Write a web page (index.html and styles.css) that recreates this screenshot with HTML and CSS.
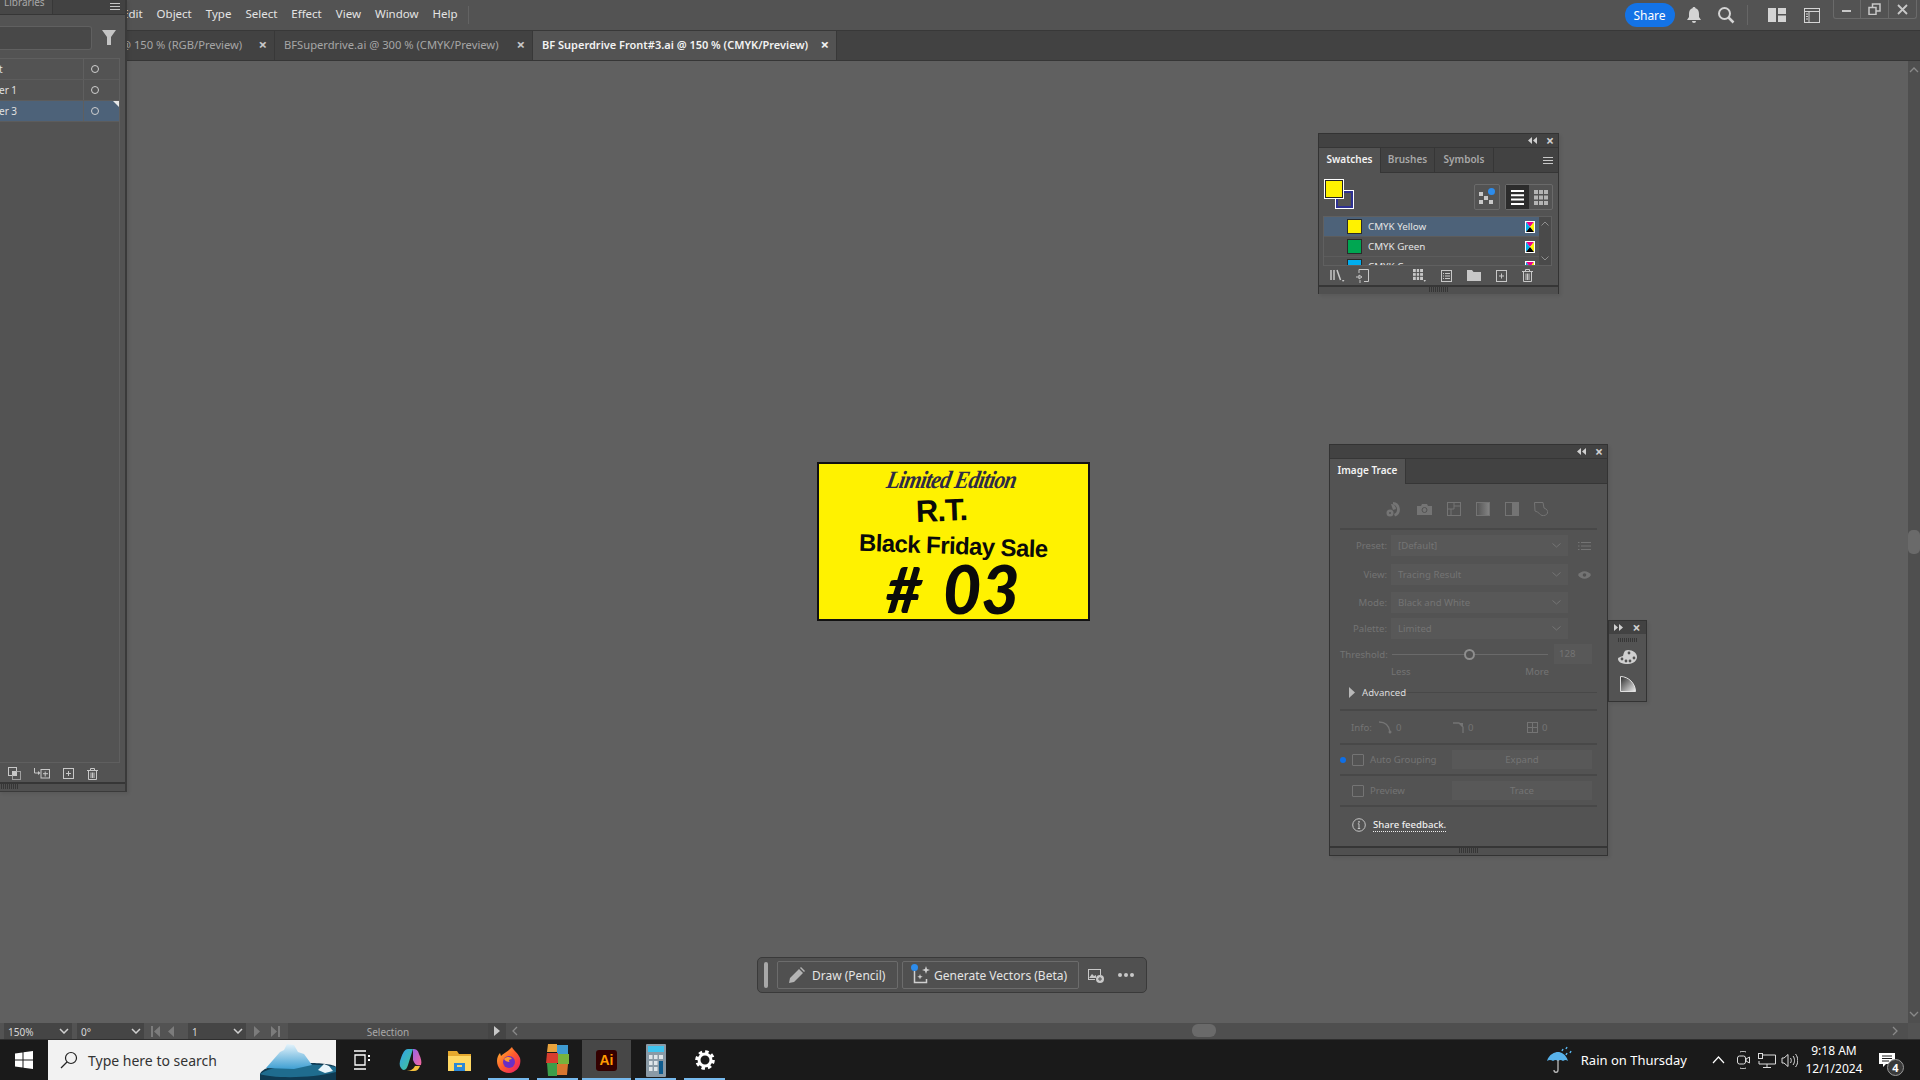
FILE: index.html
```html
<!DOCTYPE html>
<html lang="en">
<head>
  <meta charset="UTF-8" />
  <title>Adobe Illustrator</title>
  <link rel="stylesheet" href="styles.css">
</head>
<body>
  <div class="app">
    <!-- menu bar -->
    <header class="menubar">
      <nav class="menu">
        <span class="menu-edit">Edit</span>
        <span>Object</span>
        <span>Type</span>
        <span>Select</span>
        <span>Effect</span>
        <span>View</span>
        <span>Window</span>
        <span>Help</span>
      </nav>
      <div class="menu-sep"></div>
      <div class="top-right">
        <button class="share">Share</button>
        <svg class="top-icon bell" width="16" height="18" viewBox="0 0 16 18"><path fill="#d4d4d4" d="M8 1c1 0 1.500.6 1.500 1.300C12 3 13 5 13 8v3l2 3H1l2-3V8c0-3 1-5 3.500-5.700C6.500 1.600 7 1 8 1z"/><path fill="#d4d4d4" d="M6 15h4a2 2 0 0 1-4 0z"/></svg>
        <svg class="top-icon find" width="18" height="18" viewBox="0 0 18 18"><circle cx="7.500" cy="7.500" r="5.500" fill="none" stroke="#d4d4d4" stroke-width="2"/><path d="M11.500 11.500l5 5" stroke="#d4d4d4" stroke-width="2.500"/></svg>
        <div class="top-sep"></div>
        <svg class="top-icon layout" width="18" height="14" viewBox="0 0 18 14"><path fill="#d4d4d4" d="M0 0h8v14H0zM10 0h8v6h-8zM10 7.500h8V14h-8z"/></svg>
        <svg class="top-icon frame" width="16" height="15" viewBox="0 0 16 15"><rect x=".5" y=".5" width="15" height="14" fill="none" stroke="#d4d4d4"/><path d="M1 3.500h14M5 4v10" stroke="#d4d4d4"/><path d="M2 6h2M2 8.500h2M2 11h2" stroke="#d4d4d4"/></svg>
        <div class="win-controls">
          <span class="win-btn"><svg width="11" height="11" viewBox="0 0 11 11"><path d="M1 7h9" stroke="#c8c8c8" stroke-width="2"/></svg></span>
          <span class="win-btn"><svg width="13" height="12" viewBox="0 0 13 12"><path fill="none" stroke="#c8c8c8" stroke-width="1.500" d="M1 4.500h7v7H1zM4.500 4V1h7.500v7H8.500"/></svg></span>
          <span class="win-btn"><svg width="11" height="11" viewBox="0 0 11 11"><path d="M1 1l9 9M10 1l-9 9" stroke="#c8c8c8" stroke-width="1.800"/></svg></span>
        </div>
      </div>
    </header>

    <!-- document tabs -->
    <div class="tabbar">
      <div class="doc-tab tab-one"><span class="doc-name">@ 150 % (RGB/Preview)</span><span class="doc-x">×</span></div>
      <div class="doc-tab tab-two"><span class="doc-name">BFSuperdrive.ai @ 300 % (CMYK/Preview)</span><span class="doc-x">×</span></div>
      <div class="doc-tab tab-active"><span class="doc-name">BF Superdrive Front#3.ai @ 150 % (CMYK/Preview)</span><span class="doc-x">×</span></div>
    </div>

    <!-- canvas -->
    <main class="workspace">
      <div class="canvas">
        <div class="artboard">
          <div class="art-limited">Limited Edition</div>
          <div class="art-rt">R.T.</div>
          <div class="art-sale">Black Friday Sale</div>
          <div class="art-num"><span class="art-hash">#</span><span>03</span></div>
        </div>

        <div class="quickbar">
          <div class="quick-grip"></div>
          <button class="quick-btn quick-draw">
            <svg width="17" height="17" viewBox="0 0 17 17"><path fill="#b4b4b4" d="M1 16l1-5L11 2l4 4-9 9zM12 1l1-1 4 4-1 1z"/></svg>
            Draw (Pencil)
          </button>
          <button class="quick-btn quick-gen">
            <span class="gen-icon">
              <svg width="18" height="20" viewBox="0 0 18 20"><path fill="none" stroke="#cfcfcf" stroke-width="1.500" d="M1.500 6v11.500h12V14"/><path fill="#cfcfcf" d="M13 1l1 3 3 1-3 1-1 3-1-3-3-1 3-1zM7 9l.7 2 2 .7-2 .7L7 14.500l-.7-2-2-.7 2-.7z"/></svg>
              <i class="gen-dot"></i>
            </span>
            Generate Vectors (Beta)
          </button>
          <svg class="quick-photo" width="16" height="15" viewBox="0 0 16 15"><path fill="#c8c8c8" d="M0 1h13v6h-1V2H1v9h6v1H0z"/><path fill="#c8c8c8" d="M1 10l3-4 2 2 2-1v3H1z"/><circle cx="12" cy="11" r="4" fill="#c8c8c8"/><path d="M12 9v4M10 11h4" stroke="#535353"/></svg>
          <span class="quick-more"><i></i><i></i><i></i></span>
        </div>
      </div>
      <div class="vscroll">
        <svg width="10" height="6" viewBox="0 0 10 6"><path d="M1 5l4-4 4 4" fill="none" stroke="#8a8a8a" stroke-width="1.300"/></svg>
        <span class="vscroll-thumb"></span>
        <svg width="10" height="6" viewBox="0 0 10 6"><path d="M1 1l4 4 4-4" fill="none" stroke="#8a8a8a" stroke-width="1.300"/></svg>
      </div>
    </main>

    <!-- status bar -->
    <footer class="statusbar">
      <div class="status-field field-zoom">150%</div>
      <div class="status-drop"><svg width="10" height="6" viewBox="0 0 10 6"><path d="M1 1l4 4 4-4" fill="none" stroke="#d0d0d0" stroke-width="1.500"/></svg></div>
      <div class="status-field field-rot">0°</div>
      <div class="status-drop"><svg width="10" height="6" viewBox="0 0 10 6"><path d="M1 1l4 4 4-4" fill="none" stroke="#d0d0d0" stroke-width="1.500"/></svg></div>
      <div class="status-nav nav-prev"><svg width="30" height="11" viewBox="0 0 30 11"><path fill="#7c7c7c" d="M0 0h2v11H0zM9 0v11L3 5.500zM23 0v11l-6-5.500z"/></svg></div>
      <div class="status-field field-page">1</div>
      <div class="status-drop"><svg width="10" height="6" viewBox="0 0 10 6"><path d="M1 1l4 4 4-4" fill="none" stroke="#d0d0d0" stroke-width="1.500"/></svg></div>
      <div class="status-nav"><svg width="28" height="11" viewBox="0 0 28 11"><path fill="#7c7c7c" d="M1 0v11l6-5.500zM18 0v11l6-5.500zM25 0h2v11h-2z"/></svg></div>
      <div class="status-tool">Selection</div>
      <div class="status-arrow"><svg width="6" height="10" viewBox="0 0 6 10"><path fill="#c8c8c8" d="M0 0l6 5-6 5z"/></svg></div>
      <div class="hscroll">
        <svg width="6" height="10" viewBox="0 0 6 10"><path d="M5 1L1 5l4 4" fill="none" stroke="#8a8a8a" stroke-width="1.300"/></svg>
        <span class="hscroll-thumb"></span>
        <svg width="6" height="10" viewBox="0 0 6 10"><path d="M1 1l4 4-4 4" fill="none" stroke="#8a8a8a" stroke-width="1.300"/></svg>
      </div>
      <div class="status-corner"></div>
    </footer>

    <!-- windows taskbar -->
    <div class="taskbar">
      <div class="start">
        <svg width="18" height="18" viewBox="0 0 18 18"><path fill="#fff" d="M0 2.500L7.500 1.400V8.500H0zM8.500 1.300L18 0v8.500H8.500zM0 9.500h7.500v7.100L0 15.500zM8.500 9.500H18V18l-9.500-1.300z"/></svg>
      </div>
      <div class="searchbox">
        <svg width="18" height="18" viewBox="0 0 18 18"><circle cx="11" cy="7" r="5.500" fill="none" stroke="#222" stroke-width="1.200"/><path d="M7 11l-6 6" stroke="#222" stroke-width="1.200"/></svg>
        <span class="search-text">Type here to search</span>
        <svg class="iceberg" width="76" height="40" viewBox="0 0 76 40">
          <defs><linearGradient id="ice" x1="0" y1="0" x2="0" y2="1"><stop offset="0" stop-color="#e4f3fb"/><stop offset="1" stop-color="#3f9fd2"/></linearGradient></defs>
          <path fill="#0f3a52" d="M0 40V34C4 26 24 22 50 23c12 0 26 2 26 4v13z"/>
          <path fill="#1f6c8e" d="M0 34c10 4 50 5 76-2v-5c-20-4-60-4-76 7z"/>
          <path fill="url(#ice)" d="M6 28L20 12 24 10 27 4 34 5 38 12 44 14 52 25 34 29z"/>
          <path fill="#e9f5fb" d="M58 30l6-6 5 2 4 5-8 2z"/>
        </svg>
      </div>
      <div class="task-items">
        <span class="task-item">
          <svg width="17" height="20" viewBox="0 0 17 20"><path fill="none" stroke="#fff" stroke-width="1.300" d="M1 1h12M1 19h12M2 5h10v10H2z"/><path stroke="#fff" stroke-width="2" d="M16 5v2M16 9v2"/></svg>
        </span>
        <span class="task-item">
          <svg width="24" height="24" viewBox="0 0 24 24"><defs><linearGradient id="cop1" x1="0" y1="0" x2="1" y2="1"><stop offset="0" stop-color="#2e9ff0"/><stop offset="1" stop-color="#46c88c"/></linearGradient><linearGradient id="cop2" x1="0" y1="0" x2="1" y2="1"><stop offset="0" stop-color="#9a62e8"/><stop offset="1" stop-color="#f5679a"/></linearGradient></defs><path fill="url(#cop1)" d="M9 1h5L9 17c-1 3-2 5-5 5-3-2-4-5-3-9C3 7 5 1 9 1z"/><path fill="url(#cop2)" d="M14 1c3 0 5 1 6 5 2 4 3 8 2 11-4 1-6 0-8-5z"/><path fill="#f5c13d" d="M6 23c5 0 8-1 10-5l5 0c-1 3-3 5-6 5z"/></svg>
        </span>
        <span class="task-item">
          <svg width="23" height="21" viewBox="0 0 23 21"><path fill="#e6a92e" d="M0 1h9l2 3h12v17H0z"/><path fill="#ffd864" d="M0 6h23v15H0z"/><path fill="#2b88d8" d="M6 13h11v8H6z"/><path fill="#ffd864" d="M9 15h5v2H9z"/></svg>
        </span>
        <span class="task-item task-open">
          <svg width="24" height="26" viewBox="0 0 24 26"><defs><linearGradient id="fox" x1="0" y1="0" x2="1" y2="1"><stop offset="0" stop-color="#ffc02e"/><stop offset=".5" stop-color="#ff5a2e"/><stop offset="1" stop-color="#e5176e"/></linearGradient></defs><path fill="url(#fox)" d="M15 0c1 3 6 6 8 11 2 8-4 15-11 15C5 26 0 21 0 14c0-3 1-6 3-8l1 3c2-3 7-4 11-9z"/><circle cx="12" cy="15" r="6" fill="#6a2fc4"/><path fill="#ff9a2e" d="M7 12c3-3 7-2 8 0-3 0-4 2-2 3-3 0-5-1-6-3z"/></svg>
        </span>
        <span class="task-item task-open">
          <svg width="23" height="32" viewBox="0 0 23 32"><path fill="#e8a33d" d="M2 0h9v8H1z"/><path fill="#3e9ad0" d="M11 1h11v9H11z"/><path fill="#d83d2e" d="M1 9h11v10H0z"/><path fill="#78b33c" d="M12 10h11v10H12z"/><path fill="#3c9e4a" d="M1 19h10v13H2z"/><path fill="#d8762e" d="M11 20h11l-1 11H11z"/></svg>
        </span>
        <span class="task-item task-active task-open">
          <span class="ai-icon">Ai</span>
        </span>
        <span class="task-item task-open">
          <svg width="20" height="33" viewBox="0 0 20 33"><rect width="20" height="33" rx="1" fill="#8a9aa6"/><rect x="2" y="2" width="16" height="6" fill="#3fc3ee"/><g fill="#dfe5e9"><path d="M3 11h3.500v4H3zM8 11h3.500v4H8zM13 11h4v4h-4zM3 17h3.500v4H3zM8 17h3.500v4H8zM3 23h3.500v4H3zM8 23h3.500v4H8z"/></g><path fill="#0f5c8f" d="M13 17h4v13h-4z"/></svg>
        </span>
        <span class="task-item task-open">
          <svg width="20" height="20" viewBox="0 0 20 20"><circle cx="10" cy="10" r="6" fill="none" stroke="#fff" stroke-width="3"/><circle cx="10" cy="10" r="8.300" fill="none" stroke="#fff" stroke-width="3" stroke-dasharray="3.500 3"/></svg>
        </span>
      </div>
      <div class="tray">
        <svg class="tray-umbrella" width="26" height="30" viewBox="0 0 26 30"><path fill="#58b2ea" d="M0 16C2 9 8 7 11 7s8 2 10 9c-2-1.500-3-1.500-5 0-2-1.500-3-1.500-5 0-2-1.500-3-1.500-5 0-2-1.500-4-1.500-6 0z"/><path d="M11 15v10c0 3-4 3-4 0" fill="none" stroke="#bbb" stroke-width="1.300"/><path d="M16 4l-1 2M20 2l-1 2M24 6l-1 2M20 8l-1 2" stroke="#58b2ea" stroke-width="1.500"/></svg>
        <span class="tray-weather">Rain on Thursday</span>
        <svg class="tray-chev" width="13" height="8" viewBox="0 0 13 8"><path d="M1 7l5.500-6L12 7" fill="none" stroke="#fff" stroke-width="1.200"/></svg>
        <svg class="tray-icon tray-meet" width="13" height="18" viewBox="0 0 13 18"><path d="M3 1c2-1 4-1 6 0M3 17c2 1 4 1 6 0" stroke="#ddd" fill="none"/><rect x=".5" y="5" width="8" height="8" rx="2" fill="none" stroke="#ddd"/><path d="M9 8l3.500-2v6L9 10z" fill="none" stroke="#ddd"/></svg>
        <svg class="tray-icon tray-net" width="18" height="15" viewBox="0 0 18 15"><path d="M5 2h12.500v9H1V8M9 11v3M5 14.500h8" fill="none" stroke="#ddd"/><rect x=".5" y=".5" width="4" height="5" fill="none" stroke="#ddd"/></svg>
        <svg class="tray-icon" width="17" height="15" viewBox="0 0 17 15"><path d="M1 5h2l4-3.500v12L3 10H1z" fill="none" stroke="#ddd"/><path d="M9.500 5c1 1.500 1 3.500 0 5M12 3c2 2.500 2 6.500 0 9M14.500 1c3 3.500 3 9.500 0 13" fill="none" stroke="#ddd"/></svg>
        <div class="clock"><span>9:18 AM</span><span>12/1/2024</span></div>
        <span class="notify">
          <svg width="16" height="14" viewBox="0 0 16 14"><path fill="#fff" d="M0 0h16v11H7l-3 3v-3H0z"/><path d="M3 3h10M3 5.500h10M3 8h7" stroke="#1b1b1b"/></svg>
          <span class="notify-badge">4</span>
        </span>
      </div>
    </div>

    <!-- left panel -->
    <aside class="panel left-panel">
      <div class="left-head">
        <span class="left-libs">Libraries</span>
        <span class="menu-lines"><i></i><i></i><i></i></span>
      </div>
      <div class="left-search">
        <div class="left-input"></div>
        <svg width="14" height="15" viewBox="0 0 14 15"><path fill="#c4c4c4" d="M0 0h14L9 7v8H5V7z"/></svg>
      </div>
      <div class="layer-list">
        <div class="layer-row"><span class="layer-name">t</span><span class="layer-dot"></span></div>
        <div class="layer-row"><span class="layer-name">er 1</span><span class="layer-dot"></span></div>
        <div class="layer-row layer-sel"><span class="layer-name">er 3</span><span class="layer-dot"></span></div>
      </div>
      <div class="left-foot">
        <svg width="13" height="13" viewBox="0 0 13 13"><rect x=".5" y=".5" width="8" height="8" fill="none" stroke="#c8c8c8"/><rect x="4.500" y="4.500" width="8" height="8" fill="none" stroke="#a0a0a0"/><rect x="4" y="4" width="4.500" height="4.500" fill="#c8c8c8"/></svg>
        <svg width="16" height="11" viewBox="0 0 16 11"><path d="M.5 0v5h4" fill="none" stroke="#c8c8c8"/><path d="M4 3l2.500 2L4 7z" fill="#c8c8c8"/><rect x="7" y="1.500" width="8.500" height="8.500" fill="none" stroke="#c8c8c8"/><path d="M11.200 3.500v5M9 5.700h5" stroke="#c8c8c8"/></svg>
        <svg width="11" height="11" viewBox="0 0 11 11"><rect x=".5" y=".5" width="10" height="10" fill="none" stroke="#c8c8c8"/><path d="M5.500 3v5M3 5.500h5" stroke="#c8c8c8"/></svg>
        <svg width="11" height="12" viewBox="0 0 11 12"><path d="M0 2.500h11M3.500 2V.5h4V2M1.500 3v8.500h8V3M4 4.500v5.500M5.500 4.500v5.500M7 4.500v5.500" fill="none" stroke="#c8c8c8"/></svg>
      </div>
      <div class="panel-grip left-grip"><span class="grip"></span></div>
    </aside>

    <!-- swatches panel -->
    <section class="panel swatches">
      <div class="panel-head">
        <svg width="9" height="7" viewBox="0 0 9 7"><path fill="#d0d0d0" d="M4 0v7L0 3.500zM9 0v7L5 3.500z"/></svg>
        <span class="panel-x">×</span>
      </div>
      <div class="panel-tabs">
        <span class="panel-tab tab-on">Swatches</span>
        <span class="panel-tab">Brushes</span>
        <span class="panel-tab">Symbols</span>
        <span class="menu-lines"><i></i><i></i><i></i></span>
      </div>
      <div class="swatch-tools">
        <div class="color-pair">
          <span class="color-stroke"></span>
          <span class="color-fill"></span>
        </div>
        <span class="kind-btn">
          <svg width="18" height="19" viewBox="0 0 18 19"><path fill="#c8c8c8" d="M1 4h4v4H1zM6 8h4v4H6zM1 12h4v4H1zM11 12h4v4h-4z"/><circle cx="13.500" cy="3.500" r="3.500" fill="#2d8ceb"/></svg>
        </span>
        <span class="view-btns">
          <span class="view-btn view-on"><svg width="13" height="15" viewBox="0 0 13 15"><path fill="#fff" d="M0 0h13v2H0zM0 4.300h13v2H0zM0 8.600h13v2H0zM0 13h13v2H0z"/></svg></span>
          <span class="view-btn"><svg width="14" height="15" viewBox="0 0 14 15"><path fill="#b4b4b4" d="M0 0h4v4H0zM5 0h4v4H5zM10 0h4v4h-4zM0 5.500h4v4H0zM5 5.500h4v4H5zM10 5.500h4v4h-4zM0 11h4v4H0zM5 11h4v4H5zM10 11h4v4h-4z"/></svg></span>
        </span>
      </div>
      <div class="swatch-list">
        <div class="swatch-rows">
          <div class="swatch-row swatch-sel"><span class="chip chip-yellow"></span><span class="swatch-name">CMYK Yellow</span><svg class="cmyk" width="10" height="12" viewBox="0 0 10 12"><rect width="10" height="12" fill="#fff"/><path fill="#ec008c" d="M1 1h8L5 6z"/><path fill="#00aeef" d="M1 1v10l4-5z"/><path fill="#fff200" d="M9 1v10L5 6z"/><path fill="#000" d="M1 11h8L5 6z"/></svg></div>
          <div class="swatch-row"><span class="chip chip-green"></span><span class="swatch-name">CMYK Green</span><svg class="cmyk" width="10" height="12" viewBox="0 0 10 12"><rect width="10" height="12" fill="#fff"/><path fill="#ec008c" d="M1 1h8L5 6z"/><path fill="#00aeef" d="M1 1v10l4-5z"/><path fill="#fff200" d="M9 1v10L5 6z"/><path fill="#000" d="M1 11h8L5 6z"/></svg></div>
          <div class="swatch-row swatch-cut"><span class="chip chip-cyan"></span><span class="swatch-name">CMYK Cyan</span><svg class="cmyk" width="10" height="12" viewBox="0 0 10 12"><rect width="10" height="12" fill="#fff"/><path fill="#ec008c" d="M1 1h8L5 6z"/><path fill="#00aeef" d="M1 1v10l4-5z"/><path fill="#fff200" d="M9 1v10L5 6z"/></svg></div>
        </div>
        <div class="swatch-scroll">
          <svg width="8" height="5" viewBox="0 0 8 5"><path d="M.5 4.500L4 1l3.500 3.500" fill="none" stroke="#8f8f8f"/></svg>
          <svg width="8" height="5" viewBox="0 0 8 5"><path d="M.5.500L4 4 7.500.500" fill="none" stroke="#8f8f8f"/></svg>
        </div>
      </div>
      <div class="swatch-foot">
        <svg class="foot-lib" width="15" height="13" viewBox="0 0 15 13"><path d="M1 1v10M4 1v10M7 1l3.500 10" stroke="#c8c8c8" stroke-width="1.500"/><path d="M12 11h2.500L13 13z" fill="#c8c8c8"/></svg>
        <svg class="foot-place" width="13" height="14" viewBox="0 0 13 14"><path d="M3 4V.5h9.500V12.500H8" fill="none" stroke="#c8c8c8"/><path d="M0 8h5M3 6l3 2-3 2zM4 11v3" stroke="#c8c8c8"/></svg>
        <svg class="foot-grid" width="13" height="13" viewBox="0 0 13 13"><path fill="#c8c8c8" d="M0 0h10v11H0z"/><path d="M3.300 0v11M6.600 0v11M0 3.600h10M0 7.300h10" stroke="#535353"/><path fill="#c8c8c8" d="M10.500 11h2.500L11.700 13z"/></svg>
        <svg class="foot-icon" width="11" height="12" viewBox="0 0 11 12"><rect x=".5" y=".5" width="10" height="11" fill="none" stroke="#c8c8c8"/><path d="M2 3.500h1M4 3.500h5M2 6h1M4 6h5M2 8.500h1M4 8.500h5" stroke="#c8c8c8"/></svg>
        <svg class="foot-icon" width="14" height="11" viewBox="0 0 14 11"><path fill="#c8c8c8" d="M0 0h5l1.500 2H14v9H0z"/></svg>
        <svg class="foot-icon" width="11" height="12" viewBox="0 0 11 12"><rect x=".5" y=".5" width="10" height="11" fill="none" stroke="#c8c8c8"/><path d="M5.500 3.500v5M3 6h5" stroke="#c8c8c8"/></svg>
        <svg class="foot-icon" width="11" height="13" viewBox="0 0 11 13"><path d="M0 2.500h11M3.500 2V.5h4V2M1.500 3v9.500h8V3M4 4.500v6.500M5.500 4.500v6.500M7 4.500v6.500" fill="none" stroke="#c8c8c8"/></svg>
      </div>
      <div class="panel-grip"><span class="grip"></span></div>
    </section>

    <!-- image trace panel -->
    <section class="panel trace">
      <div class="panel-head">
        <svg width="9" height="7" viewBox="0 0 9 7"><path fill="#d0d0d0" d="M4 0v7L0 3.500zM9 0v7L5 3.500z"/></svg>
        <span class="panel-x">×</span>
      </div>
      <div class="panel-tabs"><span class="panel-tab tab-on tab-trace">Image Trace</span></div>
      <div class="trace-body">
        <div class="trace-icons">
          <svg width="16" height="15" viewBox="0 0 16 15"><path fill="#747474" d="M7 0a7.500 7.500 0 0 1 2 14.500L8 12a5 5 0 0 0-1-9.500z"/><path fill="#747474" d="M5 2a5 5 0 0 1 5 5l-3 1z"/><circle cx="4" cy="11" r="3.500" fill="#747474"/><circle cx="4" cy="11" r="1" fill="#535353"/></svg>
          <svg width="15" height="11" viewBox="0 0 15 11"><path fill="#747474" d="M0 2h4l1-2h5l1 2h4v9H0z"/><circle cx="7.500" cy="6" r="2.500" fill="none" stroke="#535353"/></svg>
          <svg width="14" height="14" viewBox="0 0 14 14"><rect x=".5" y=".5" width="13" height="13" fill="none" stroke="#747474"/><path d="M7 .5V7H.5M7 4h6.500M4 7v6.500" fill="none" stroke="#747474"/></svg>
          <svg width="14" height="14" viewBox="0 0 14 14"><defs><linearGradient id="ggr"><stop offset="0" stop-color="#535353"/><stop offset="1" stop-color="#858585"/></linearGradient></defs><rect x=".5" y=".5" width="13" height="13" fill="url(#ggr)" stroke="#747474"/></svg>
          <svg width="14" height="14" viewBox="0 0 14 14"><rect x=".5" y=".5" width="13" height="13" fill="none" stroke="#747474"/><rect x="7" y="0" width="7" height="14" fill="#747474"/></svg>
          <svg width="14" height="14" viewBox="0 0 14 14"><path d="M.5.500H9L10 6c3 1 4 3 3.500 5C13 13 10 14 8 13.500 6 13 5 10 1 9z" fill="none" stroke="#747474"/></svg>
        </div>
        <div class="trace-row row-preset">
          <span class="trace-label">Preset:</span>
          <div class="trace-select"><span>[Default]</span><svg width="9" height="5" viewBox="0 0 9 5"><path d="M.5.500L4.500 4l4-3.500" fill="none" stroke="#747474"/></svg></div>
          <svg class="row-icon" width="13" height="8" viewBox="0 0 13 8"><path d="M3 .5h10M3 4h10M3 7.500h10M0 .5h1.500M0 4h1.500M0 7.500h1.500" stroke="#747474"/></svg>
        </div>
        <div class="trace-row row-view">
          <span class="trace-label">View:</span>
          <div class="trace-select"><span>Tracing Result</span><svg width="9" height="5" viewBox="0 0 9 5"><path d="M.5.500L4.500 4l4-3.500" fill="none" stroke="#747474"/></svg></div>
          <svg class="row-icon" width="13" height="8" viewBox="0 0 13 8"><path fill="#747474" d="M0 4c3-5 10-5 13 0-3 5-10 5-13 0z"/><circle cx="6.500" cy="4" r="1.800" fill="#535353"/></svg>
        </div>
        <div class="trace-row row-mode">
          <span class="trace-label">Mode:</span>
          <div class="trace-select"><span>Black and White</span><svg width="9" height="5" viewBox="0 0 9 5"><path d="M.5.500L4.500 4l4-3.500" fill="none" stroke="#747474"/></svg></div>
        </div>
        <div class="trace-row row-palette">
          <span class="trace-label">Palette:</span>
          <div class="trace-select"><span>Limited</span><svg width="9" height="5" viewBox="0 0 9 5"><path d="M.5.500L4.500 4l4-3.500" fill="none" stroke="#747474"/></svg></div>
        </div>
        <div class="threshold">
          <span class="trace-label">Threshold:</span>
          <div class="slider"><span class="slider-knob"></span></div>
          <span class="thresh-val">128</span>
        </div>
        <div class="less-more"><span>Less</span><span>More</span></div>
        <div class="advanced">
          <svg width="6" height="11" viewBox="0 0 6 11"><path fill="#b8b8b8" d="M0 0l6 5.500L0 11z"/></svg>
          <span class="adv-text">Advanced</span>
          <span class="adv-line"></span>
        </div>
        <div class="trace-info">
          <span class="info-label">Info:</span>
          <span class="info-item item-paths"><svg width="13" height="13" viewBox="0 0 13 13"><path d="M0 1c6 0 10 3 11 10" fill="none" stroke="#747474" stroke-width="1.300"/><circle cx="11" cy="11" r="1.500" fill="#747474"/></svg>0</span>
          <span class="info-item item-anchors"><svg width="11" height="11" viewBox="0 0 11 11"><path d="M0 1h6l4 4v6" fill="none" stroke="#747474" stroke-width="1.300"/><path fill="#747474" d="M6 1h4v4z"/></svg>0</span>
          <span class="info-item"><svg width="11" height="11" viewBox="0 0 11 11"><rect x=".5" y=".5" width="10" height="10" fill="none" stroke="#747474"/><path d="M5.500 0v11M0 5.500h11" stroke="#747474"/></svg>0</span>
        </div>
        <div class="trace-check row-group">
          <i class="blue-dot"></i>
          <span class="checkbox"></span>
          <span class="check-label">Auto Grouping</span>
          <span class="trace-btn">Expand</span>
        </div>
        <div class="trace-check row-preview">
          <span class="checkbox"></span>
          <span class="check-label">Preview</span>
          <span class="trace-btn">Trace</span>
        </div>
        <div class="feedback">
          <svg width="14" height="14" viewBox="0 0 14 14"><circle cx="7" cy="7" r="6.300" fill="none" stroke="#c4c4c4"/><path d="M7 5.800v4.800M5.800 10.500h2.400M5.800 5.800H7" fill="none" stroke="#c4c4c4"/><circle cx="7" cy="3.800" r=".9" fill="#c4c4c4"/></svg>
          <span class="feedback-link">Share feedback.</span>
        </div>
      </div>
      <div class="panel-grip"><span class="grip"></span></div>
    </section>

    <!-- collapsed panel dock -->
    <section class="panel mini-dock">
      <div class="panel-head mini-head">
        <svg width="9" height="7" viewBox="0 0 9 7"><path fill="#d0d0d0" d="M0 0v7l4-3.500zM5 0v7l4-3.500z"/></svg>
        <span class="panel-x">×</span>
      </div>
      <span class="grip mini-grip"></span>
      <svg class="mini-palette" width="19" height="14" viewBox="0 0 19 14"><path fill="#d0d0d0" d="M10 0c5 0 9 3 9 7 0 3-3 7-9 7-6 0-10-2-10-5 0-2 3-2 5-3 1-3 1-6 5-6z"/><g fill="#535353"><circle cx="4" cy="9" r="1.400"/><circle cx="8" cy="11" r="1.400"/><circle cx="12" cy="11" r="1.400"/><circle cx="16" cy="8" r="1.400"/><circle cx="11" cy="3" r="1.400"/></g></svg>
      <svg class="mini-grad" width="16" height="16" viewBox="0 0 16 16"><defs><linearGradient id="fan" x1="0" y1="0" x2="1" y2="1"><stop offset="0" stop-color="#2a2a2a"/><stop offset="1" stop-color="#f0f0f0"/></linearGradient></defs><path fill="url(#fan)" stroke="#e0e0e0" d="M.5.500c8 0 15 7 15 15H.5z"/></svg>
    </section>
  </div>
</body>
</html>
```

FILE: styles.css
```css
* {
  box-sizing: border-box;
}

html, body {
  margin: 0;
  height: 100%;
  overflow: hidden;
}

body {
  font-family: "Noto Sans", "Open Sans", sans-serif;
  font-size: 11px;
  color: #d8d8d8;
}

button {
  font-family: inherit;
}

.app {
  position: relative;
  display: flex;
  flex-direction: column;
  width: 1920px;
  height: 1080px;
  background: #606060;
}

/* menu bar */
.menubar {
  display: flex;
  align-items: center;
  height: 31px;
  flex: none;
  background: #535353;
  border-bottom: 1px solid #383838;
}

.menu {
  display: flex;
  gap: 14px;
  padding: 0 0 3px 122px;
  font-size: 11.500px;
  color: #e4e4e4;
}

.menu-sep {
  width: 1px;
  height: 18px;
  margin-left: 10px;
  background: #636363;
}

.top-right {
  display: flex;
  align-items: center;
  margin-left: auto;
  height: 30px;
}

.share {
  width: 50px;
  height: 24px;
  padding: 0;
  border: none;
  border-radius: 12px;
  background: #1473e6;
  color: #fff;
  font-size: 12px;
}

.top-icon {
  display: block;
}

.bell {
  margin-left: 11px;
}

.find {
  margin-left: 15px;
}

.top-sep {
  width: 1px;
  height: 20px;
  margin: 0 20px 0 12px;
  background: #666;
}

.frame {
  margin-left: 18px;
}

.win-controls {
  display: flex;
  align-self: flex-start;
  height: 19px;
  margin: 0 3px 0 13px;
  border: 1px solid #6a6a6a;
  border-top: none;
  border-radius: 0 0 3px 3px;
}

.win-btn {
  display: flex;
  align-items: center;
  justify-content: center;
  width: 27.500px;
  border-right: 1px solid #6a6a6a;
}

.win-btn:last-child {
  border-right: none;
}

/* tabs */
.tabbar {
  display: flex;
  height: 30px;
  flex: none;
  background: #424242;
  border-bottom: 1px solid #363636;
}

.doc-tab {
  display: flex;
  align-items: center;
  justify-content: space-between;
  height: 29px;
  padding: 0 7px 2px 12px;
  border-right: 1px solid #383838;
  color: #a6a6a6;
  font-size: 11.200px;
}

.doc-x {
  font-size: 15px;
  font-weight: 700;
  line-height: 1;
  color: #c8c8c8;
}

.tab-one {
  width: 275px;
  padding-left: 121px;
}

.tab-two {
  width: 258px;
  padding-left: 9px;
}

.tab-active {
  width: 304px;
  padding-left: 9px;
  background: #535353;
  color: #f2f2f2;
  font-size: 11px;
  font-weight: 600;
}

.tab-active .doc-x {
  color: #f2f2f2;
}

/* canvas */
.workspace {
  display: flex;
  flex: 1;
  min-height: 0;
}

.canvas {
  position: relative;
  flex: 1;
  background: #606060;
}

.artboard {
  position: absolute;
  left: 817px;
  top: 401px;
  width: 273px;
  height: 159px;
  background: #fff200;
  border: 2px solid #111;
  color: #0a0a0a;
}

.art-limited {
  position: absolute;
  left: 68px;
  top: 2px;
  font: italic 700 25px "Liberation Serif", serif;
  letter-spacing: -1px;
  color: #2e2b45;
  white-space: nowrap;
  transform: scaleX(.88) skewX(-12deg);
  transform-origin: left center;
}

.art-rt {
  position: absolute;
  left: 97px;
  top: 29px;
  font: 700 31px "Liberation Sans", sans-serif;
  letter-spacing: -1px;
  transform: rotate(-2deg);
}

.art-sale {
  position: absolute;
  left: 40px;
  top: 68px;
  font: 700 24px "Liberation Sans", sans-serif;
  letter-spacing: -.6px;
  white-space: nowrap;
  transform: rotate(2deg);
}

.art-num {
  position: absolute;
  left: 67px;
  top: 95px;
  display: flex;
  align-items: center;
  gap: 21px;
  font: italic 900 66px Lato, sans-serif;
  line-height: 60px;
}

.art-hash {
  font-size: 62px;
}

/* contextual task bar */
.quickbar {
  position: absolute;
  left: 757px;
  top: 896px;
  display: flex;
  align-items: center;
  width: 390px;
  height: 36px;
  padding-left: 6px;
  background: #505050;
  border: 1px solid #3a3a3a;
  border-radius: 5px;
}

.quick-grip {
  width: 4px;
  height: 26px;
  margin-right: 9px;
  border-radius: 2px;
  background: #a8a8a8;
}

.quick-btn {
  display: flex;
  align-items: center;
  height: 28px;
  padding: 0;
  background: transparent;
  border: 1px solid #6c6c6c;
  border-radius: 2px;
  color: #e4e4e4;
  font-size: 12px;
}

.quick-draw {
  width: 121px;
  gap: 7px;
  padding-left: 10px;
  margin-right: 4px;
}

.quick-gen {
  width: 177px;
  gap: 3px;
  padding-left: 10px;
}

.gen-icon {
  position: relative;
  display: block;
  width: 18px;
  height: 20px;
}

.gen-dot {
  position: absolute;
  left: -2px;
  top: -1px;
  width: 7px;
  height: 7px;
  border-radius: 50%;
  background: #2d8ceb;
}

.quick-photo {
  margin-left: 9px;
}

.quick-more {
  display: flex;
  gap: 2px;
  margin-left: 14px;
}

.quick-more i {
  width: 4px;
  height: 4px;
  border-radius: 50%;
  background: #c8c8c8;
}

/* scrollbars */
.vscroll {
  display: flex;
  flex-direction: column;
  align-items: center;
  justify-content: space-between;
  width: 12px;
  padding: 6px 0;
  background: #4f4f4f;
}

.vscroll-thumb {
  width: 12px;
  height: 24px;
  border-radius: 5px;
  background: #6a6a6a;
}

.statusbar {
  display: flex;
  align-items: stretch;
  height: 17px;
  flex: none;
  padding-left: 4px;
  background: #535353;
  border-bottom: 1px solid #2e2e2e;
  color: #d8d8d8;
  font-size: 10px;
}

.status-field {
  display: flex;
  align-items: center;
  padding: 2px 0 0 4px;
  background: #454545;
}

.field-zoom {
  width: 52px;
}

.field-rot {
  width: 51px;
  margin-left: 5px;
}

.field-page {
  width: 42px;
}

.status-drop {
  display: flex;
  align-items: center;
  justify-content: center;
  width: 16px;
  background: #454545;
}

.status-nav {
  display: flex;
  align-items: center;
  justify-content: center;
  width: 42px;
}

.nav-prev {
  width: 44px;
}

.status-tool {
  display: flex;
  align-items: center;
  justify-content: center;
  width: 200px;
  padding-top: 2px;
  background: #4a4a4a;
  color: #a8a8a8;
}

.status-arrow {
  display: flex;
  align-items: center;
  justify-content: center;
  width: 18px;
  background: #454545;
}

.hscroll {
  position: relative;
  display: flex;
  align-items: center;
  justify-content: space-between;
  flex: 1;
  padding: 0 10px 0 6px;
  background: #4f4f4f;
}

.hscroll-thumb {
  position: absolute;
  left: 686px;
  top: 1px;
  width: 24px;
  height: 13px;
  border-radius: 6px;
  background: #6a6a6a;
}

.status-corner {
  width: 12px;
  background: #535353;
}

/* windows taskbar */
.taskbar {
  display: flex;
  align-items: stretch;
  height: 40px;
  flex: none;
  background: #1a1a1a;
  color: #fff;
}

.start {
  display: flex;
  align-items: center;
  justify-content: center;
  width: 48px;
}

.searchbox {
  position: relative;
  display: flex;
  align-items: center;
  gap: 10px;
  width: 288px;
  padding-left: 12px;
  background: #f2f2f2;
  color: #333;
  font-size: 14px;
}

.iceberg {
  position: absolute;
  right: 0;
  top: 0;
}

.task-items {
  display: flex;
  padding-left: 1px;
}

.task-item {
  position: relative;
  display: flex;
  align-items: center;
  justify-content: center;
  width: 49px;
}

.task-open::after {
  content: "";
  position: absolute;
  left: 4px;
  right: 4px;
  bottom: 0;
  height: 2px;
  background: #76b9ed;
}

.task-active {
  background: #474747;
}

.task-active::after {
  left: 0;
  right: 0;
}

.ai-icon {
  display: block;
  width: 21px;
  height: 21px;
  border-radius: 3px;
  background: #330000;
  color: #ff9a00;
  font: 700 14px/21px "Liberation Sans", sans-serif;
  text-align: center;
}

.tray {
  display: flex;
  align-items: center;
  margin-left: auto;
  font-size: 13px;
}

.tray-umbrella {
  margin-right: 8px;
}

.tray-weather {
  margin-right: 25px;
}

.tray-chev {
  margin-right: 12px;
}

.tray-icon {
  margin-right: 10px;
}

.tray-meet {
  margin-right: 8px;
}

.tray-net {
  margin-right: 5px;
}

.clock {
  display: flex;
  flex-direction: column;
  align-items: center;
  width: 70px;
  margin-left: -9px;
  font-size: 12px;
  line-height: 18px;
}

.notify {
  position: relative;
  display: block;
  width: 16px;
  height: 14px;
  margin: 0 25px 0 10px;
}

.notify svg {
  display: block;
}

.notify-badge {
  position: absolute;
  left: 8px;
  top: 6px;
  width: 17px;
  height: 17px;
  border: 1px solid #999;
  border-radius: 50%;
  background: #3a3a3a;
  font-size: 11px;
  font-weight: 700;
  line-height: 15px;
  text-align: center;
}

/* panels */
.panel {
  position: absolute;
  display: flex;
  flex-direction: column;
  background: #535353;
  border: 1px solid #333;
  box-shadow: 2px 2px 3px rgba(0, 0, 0, .08);
}

.panel-head {
  display: flex;
  align-items: center;
  justify-content: flex-end;
  gap: 9px;
  height: 13px;
  flex: none;
  padding-right: 4px;
  background: #424242;
  color: #d0d0d0;
}

.panel-x {
  font-size: 14px;
  font-weight: 700;
  line-height: 1;
}

.panel-tabs {
  display: flex;
  height: 26px;
  flex: none;
  background: #424242;
  border-top: 1px solid #363636;
  border-bottom: 1px solid #363636;
}

.panel-tab {
  display: flex;
  align-items: center;
  justify-content: center;
  height: 25px;
  width: 54px;
  padding-bottom: 3px;
  border-right: 1px solid #363636;
  color: #a8a8a8;
  font-size: 10px;
  font-weight: 600;
}

.panel-tab:nth-child(3) {
  width: 59px;
}

.panel-tab.tab-on {
  width: 62px;
  background: #535353;
  color: #f2f2f2;
}

.panel-tab.tab-trace {
  width: 76px;
}

.menu-lines {
  display: flex;
  flex-direction: column;
  gap: 2px;
  width: 10px;
  margin: auto 5px auto auto;
}

.menu-lines i {
  height: 1px;
  background: #c8c8c8;
}

.panel-grip {
  display: flex;
  justify-content: center;
  height: 9px;
  flex: none;
  margin-top: auto;
  border-top: 2px solid #363636;
  background: #505050;
}

.grip {
  display: block;
  width: 20px;
  height: 5px;
  background: repeating-linear-gradient(to right, #363636 0 1px, transparent 1px 2px);
}

/* left panel */
.left-panel {
  left: -1px;
  top: -1px;
  width: 128px;
  height: 793px;
  border-width: 0 2px 1px 0;
  border-color: #3a3a3a;
}

.left-head {
  display: flex;
  align-items: center;
  height: 16px;
  flex: none;
  background: #424242;
  border-bottom: 1px solid #363636;
}

.left-libs {
  display: block;
  width: 54px;
  height: 15px;
  padding-left: 5px;
  background: #474747;
  border-right: 1px solid #383838;
  color: #a8a8a8;
  font-size: 10px;
  line-height: 6px;
}

.left-head .menu-lines {
  margin-right: 5px;
}

.left-search {
  display: flex;
  align-items: center;
  gap: 10px;
  height: 43px;
  flex: none;
  padding-top: 2px;
}

.left-input {
  width: 93px;
  height: 24px;
  background: #484848;
  border: 1px solid #606060;
  border-left: none;
  border-radius: 0 3px 3px 0;
}

.layer-list {
  width: 121px;
  height: 705px;
  flex: none;
  border: 1px solid #5f5f5f;
  border-left: none;
  background: #535353;
}

.layer-row {
  position: relative;
  display: flex;
  align-items: center;
  height: 21px;
  border-bottom: 1px solid #5c5c5c;
  color: #e0e0e0;
  font-size: 10px;
  background: linear-gradient(to right, transparent 84px, #5f5f5f 84px, #5f5f5f 85px, transparent 85px);
}

.layer-name {
  width: 92px;
}

.layer-dot {
  width: 8px;
  height: 8px;
  border: 1px solid #d0d0d0;
  border-radius: 50%;
}

.layer-sel {
  background: linear-gradient(to right, #4d6279 84px, #5f5f5f 84px, #5f5f5f 85px, #4d6279 85px);
}

.layer-sel::after {
  content: "";
  position: absolute;
  right: 0;
  top: 0;
  border-top: 6px solid #e8e8e8;
  border-left: 6px solid transparent;
}

.left-foot {
  display: flex;
  align-items: center;
  height: 20px;
  margin-top: 2px;
  padding-left: 9px;
  gap: 13px;
}

.left-grip {
  justify-content: flex-start;
}

/* swatches */
.swatches {
  left: 1318px;
  top: 133px;
  width: 241px;
  height: 161px;
}

.swatch-tools {
  display: flex;
  align-items: flex-start;
  height: 43px;
  flex: none;
  padding: 6px 5px 0 5px;
}

.color-pair {
  position: relative;
  width: 30px;
  height: 30px;
}

.color-fill {
  position: absolute;
  left: 0;
  top: 0;
  width: 20px;
  height: 20px;
  background: #fff200;
  border: 1px solid #fff;
  outline: 1px solid #222;
  outline-offset: -2px;
}

.color-stroke {
  position: absolute;
  left: 11px;
  top: 11px;
  width: 19px;
  height: 19px;
  border: 3px solid #2e3192;
  outline: 1px solid #fff;
  outline-offset: -1px;
}

.kind-btn {
  display: flex;
  align-items: center;
  justify-content: center;
  width: 26px;
  height: 26px;
  margin: 5px 5px 0 auto;
  border: 1px solid #6a6a6a;
  border-radius: 2px;
}

.view-btns {
  display: flex;
  width: 48px;
  height: 26px;
  margin-top: 5px;
  border: 1px solid #6a6a6a;
  border-radius: 2px;
}

.view-btn {
  display: flex;
  align-items: center;
  justify-content: center;
  flex: 1;
}

.view-on {
  background: #2c2c2c;
}

.swatch-list {
  display: flex;
  width: 229px;
  height: 50px;
  flex: none;
  margin-left: 4px;
  border: 1px solid #606060;
  overflow: hidden;
}

.swatch-rows {
  flex: 1;
  min-width: 0;
}

.swatch-row {
  display: flex;
  align-items: center;
  height: 20px;
  padding-left: 23px;
  border-bottom: 1px solid #5c5c5c;
  color: #e4e4e4;
  font-size: 9.800px;
}

.swatch-sel {
  background: #4d6279;
}

.chip {
  width: 15px;
  height: 15px;
  margin-right: 6px;
  border: 1px solid #2a2a2a;
}

.chip-yellow {
  background: #fff200;
}

.chip-green {
  background: #00a651;
}

.chip-cyan {
  background: #00aeef;
}

.swatch-name {
  width: 157px;
}

.swatch-scroll {
  display: flex;
  flex-direction: column;
  align-items: center;
  justify-content: space-between;
  width: 12px;
  padding: 4px 0;
  background: #4a4a4a;
}

.swatch-foot {
  display: flex;
  align-items: center;
  height: 19px;
  flex: none;
  padding-left: 11px;
}

.foot-place {
  margin-left: 11px;
}

.foot-grid {
  margin-left: 44px;
}

.foot-icon {
  margin-left: 15px;
}

/* image trace */
.trace {
  left: 1329px;
  top: 444px;
  width: 279px;
  height: 412px;
}

.trace-body {
  padding: 0 10px;
  color: #747474;
  font-size: 9.600px;
}

.trace-icons {
  display: flex;
  align-items: center;
  justify-content: center;
  gap: 15px;
  height: 46px;
  padding: 6px 4px 0 0;
  border-bottom: 2px solid #484848;
}

.trace-row {
  display: grid;
  grid-template-columns: 47px 177px 30px;
  column-gap: 4px;
  align-items: center;
  height: 21px;
}

.row-preset {
  margin-top: 5px;
}

.row-view {
  margin-top: 8px;
}

.row-mode {
  margin-top: 7px;
}

.row-palette {
  margin-top: 5px;
}

.trace-label {
  width: 47px;
  text-align: right;
  white-space: nowrap;
}

.trace-select {
  display: flex;
  align-items: center;
  justify-content: space-between;
  height: 21px;
  padding: 0 7px;
  background: #585858;
}

.row-icon {
  margin-left: 6px;
}

.threshold {
  display: flex;
  align-items: center;
  height: 20px;
  margin-top: 5px;
}

.slider {
  position: relative;
  width: 156px;
  height: 1px;
  margin: 0 6px 0 5px;
  background: #6a6a6a;
}

.slider-knob {
  position: absolute;
  left: 72px;
  top: -5px;
  width: 11px;
  height: 11px;
  border: 2px solid #8e8e8e;
  border-radius: 50%;
  background: #535353;
}

.thresh-val {
  display: block;
  width: 38px;
  height: 20px;
  padding-left: 5px;
  background: #585858;
  line-height: 19px;
}

.less-more {
  display: flex;
  justify-content: space-between;
  width: 158px;
  height: 16px;
  margin-left: 51px;
  line-height: 16px;
}

.advanced {
  display: flex;
  align-items: center;
  height: 16px;
  margin-top: 4px;
  padding-left: 9px;
}

.adv-text {
  margin-left: 7px;
  color: #dcdcdc;
}

.adv-line {
  flex: 1;
  height: 1px;
  background: #484848;
}

.trace-info {
  display: flex;
  align-items: center;
  height: 36px;
  margin-top: 9px;
  padding-left: 11px;
  border-top: 2px solid #484848;
  border-bottom: 2px solid #484848;
}

.info-label {
  width: 28px;
}

.info-item {
  display: flex;
  align-items: center;
  gap: 4px;
}

.item-paths {
  width: 74px;
}

.item-anchors {
  width: 74px;
}

.trace-check {
  display: flex;
  align-items: center;
  height: 31px;
  border-bottom: 2px solid #484848;
}

.blue-dot {
  display: block;
  width: 6px;
  height: 6px;
  margin-right: 6px;
  border-radius: 50%;
  background: #0f6fe6;
}

.checkbox {
  display: block;
  width: 12px;
  height: 12px;
  border: 1px solid #747474;
  border-radius: 1px;
}

.row-preview {
  padding-left: 12px;
}

.check-label {
  margin-left: 6px;
}

.trace-btn {
  display: flex;
  align-items: center;
  justify-content: center;
  width: 140px;
  height: 19px;
  margin-left: auto;
  margin-right: 5px;
  background: #585858;
}

.feedback {
  display: flex;
  align-items: center;
  gap: 7px;
  height: 36px;
  padding-left: 12px;
}

.feedback-link {
  color: #eee;
  font-weight: 500;
  line-height: 12px;
  border-bottom: 1px dotted #eee;
}

/* collapsed dock */
.mini-dock {
  left: 1608px;
  top: 620px;
  width: 39px;
  height: 82px;
  align-items: center;
}

.mini-head {
  width: 100%;
  justify-content: center;
  gap: 9px;
  padding: 0;
}

.mini-grip {
  margin-top: 4px;
  height: 4px;
}

.mini-palette {
  margin-top: 8px;
}

.mini-grad {
  margin-top: 12px;
}
```
